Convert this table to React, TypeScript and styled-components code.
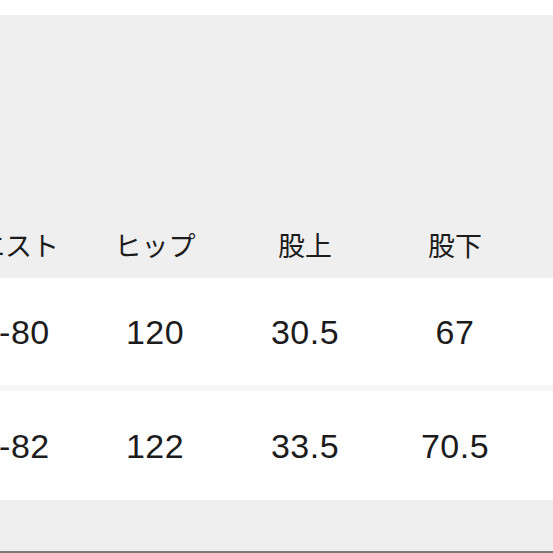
import React from "react";
import styled, { createGlobalStyle } from "styled-components";

const GlobalStyle = createGlobalStyle`
  html, body {
    margin: 0;
    padding: 0;
    background: #efefef;
  }
  body {
    font-family: "Liberation Sans", "Noto Sans CJK JP", sans-serif;
    color: #1c1c1c;
  }
`;

const Page = styled.div`
  width: 553px;
  height: 553px;
  overflow: hidden;
  display: flex;
  flex-direction: column;
  background: #efefef;
  border-bottom: 2px solid #7a7a7a;
  box-sizing: border-box;
`;

const TopStrip = styled.div`
  height: 15px;
  flex: none;
  background: #ffffff;
`;

const Table = styled.div`
  margin-top: 195px;
  margin-left: -70px;
  display: flex;
  flex-direction: column;
`;

const Body = styled.div`
  display: flex;
  flex-direction: column;
  gap: 6px;
  background: #f5f5f5;
`;

const Row = styled.div<{ $head?: boolean; $h: number }>`
  display: grid;
  grid-template-columns: repeat(5, 150px);
  height: ${(p) => p.$h}px;
  align-items: center;
  background: ${(p) => (p.$head ? "#efefef" : "#ffffff")};
`;

const Cell = styled.div<{ $head?: boolean }>`
  text-align: center;
  white-space: nowrap;
  font-size: ${(p) => (p.$head ? "27px" : "34px")};
  font-family: ${(p) =>
    p.$head
      ? `"Noto Sans CJK JP", sans-serif`
      : `"Liberation Sans", "Noto Sans CJK JP", sans-serif`};
  font-weight: 400;
  letter-spacing: ${(p) => (p.$head ? "0" : "0.5px")};
  line-height: 1;
`;

const headers = ["ウエスト", "ヒップ", "股上", "股下", "ワタリ幅"];

const rows = [
  { h: 107, cells: ["64-80", "120", "30.5", "67", "36"] },
  { h: 109, cells: ["66-82", "122", "33.5", "70.5", "38"] },
];

export default function App() {
  return (
    <>
      <GlobalStyle />
      <Page>
        <TopStrip />
        <Table>
          <Row $head $h={68}>
            {headers.map((h) => (
              <Cell key={h} $head>
                {h}
              </Cell>
            ))}
          </Row>
          <Body>
            {rows.map((r, i) => (
              <Row key={i} $h={r.h}>
                {r.cells.map((c, j) => (
                  <Cell key={j}>{c}</Cell>
                ))}
              </Row>
            ))}
          </Body>
        </Table>
      </Page>
    </>
  );
}
